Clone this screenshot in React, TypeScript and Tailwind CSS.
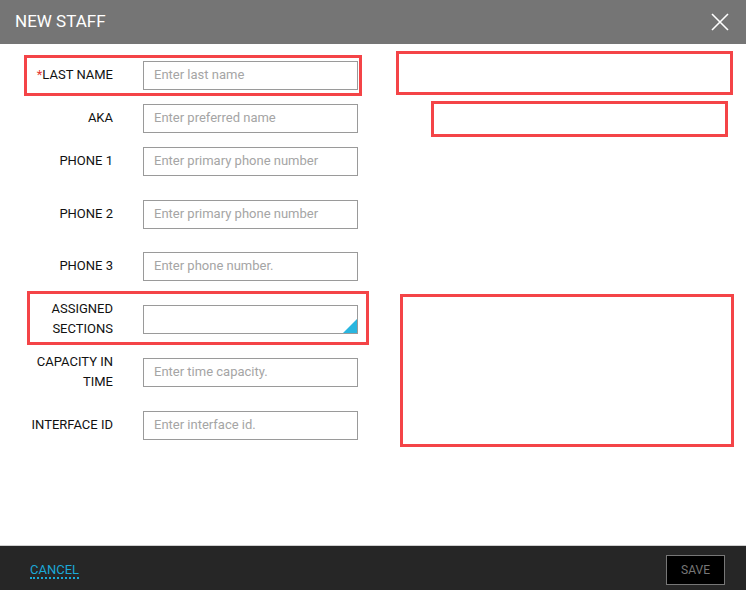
import React from "react";

const Input = ({ ph, disabled, value, drop }: { ph?: string; disabled?: boolean; value?: string; drop?: boolean }) => (
  <div className={`relative w-[215px] h-[29px] border border-[#9a9a9a] flex items-center px-[10px] text-[13px] ${disabled ? "bg-[#ebebeb]" : "bg-white"}`}>
    {value ? <span className={disabled ? "text-[#a0a0a0]" : "text-[#222]"}>{value}</span> : <span className="text-[#a5a5a5]">{ph}</span>}
    {drop && (
      <svg className="absolute right-0 bottom-0" width="14" height="14" viewBox="0 0 14 14"><polygon points="14,0 14,14 0,14" fill="#29b6e0" /></svg>
    )}
  </div>
);

const Label = ({ children, w }: { children: React.ReactNode; w: string }) => (
  <div className={`${w} text-right text-[13px] leading-[20px] text-[#111] pr-[30px]`}>{children}</div>
);

const Field = ({ label, lw, children }: { label: React.ReactNode; lw: string; children: React.ReactNode }) => (
  <div className="flex items-center">
    <Label w={lw}>{label}</Label>
    {children}
  </div>
);

const Radio = ({ on, label }: { on?: boolean; label: string }) => (
  <div className="flex items-center gap-[7px] text-[13px] text-[#222]">
    <div className="w-[15px] h-[15px] rounded-full border-[1.5px] border-[#666] flex items-center justify-center">
      {on && <div className="w-[8px] h-[8px] rounded-full bg-[#29b6e0]" />}
    </div>
    {label}
  </div>
);

export default function App() {
  const rows: [number, React.ReactNode, React.ReactNode][] = [
    [0, <Field lw="w-[143px]" label={<><span className="text-[#e53935]">*</span>LAST NAME</>}><Input ph="Enter last name" /></Field>,
      <Field lw="w-[511px]" label={<><span className="text-[#e53935]">*</span>FIRST NAME</>}><Input ph="Enter first name" /></Field>],
    [3, <Field lw="w-[143px]" label="AKA"><Input ph="Enter preferred name" /></Field>,
      <Field lw="w-[511px]" label="ROLE"><Input value="GRA-Guest Room Attendant" drop /></Field>],
    [3, <Field lw="w-[143px]" label="PHONE 1"><Input ph="Enter primary phone number" /></Field>,
      <Field lw="w-[511px]" label={<>PHONE 1<br />TYPE</>}><Input drop /></Field>],
    [13, <Field lw="w-[143px]" label="PHONE 2"><Input ph="Enter primary phone number" /></Field>,
      <Field lw="w-[511px]" label={<>PHONE 2<br />TYPE</>}><Input drop /></Field>],
    [12, <Field lw="w-[143px]" label="PHONE 3"><Input ph="Enter phone number." /></Field>,
      <Field lw="w-[511px]" label={<>PHONE 3<br />TYPE</>}><Input drop /></Field>],
    [13, <Field lw="w-[143px]" label={<>ASSIGNED<br />SECTIONS</>}><Input drop /></Field>,
      <Field lw="w-[511px]" label="PRIORITY"><Input value="1" disabled /></Field>],
    [13, <Field lw="w-[143px]" label={<>CAPACITY IN<br />TIME</>}><Input ph="Enter time capacity." /></Field>,
      <Field lw="w-[511px]" label={<>CAPACITY IN<br />POINTS</>}><Input ph="Enter points capacity" /></Field>],
    [13, <Field lw="w-[143px]" label="INTERFACE ID"><Input ph="Enter interface id." /></Field>,
      <Field lw="w-[511px]" label="ACTIVE?"><div className="w-[215px] flex items-center pl-[17px] gap-[49px]"><Radio on label="Active" /><Radio label="Inactive" /></div></Field>],
  ];
  return (
    <div className="relative w-[746px] h-[590px] flex flex-col bg-white" style={{ fontFamily: "Roboto, 'Liberation Sans', sans-serif" }}>
      <div className="h-[44px] bg-[#757575] flex items-center justify-between px-[15px] shrink-0">
        <span className="text-white text-[17px]">NEW STAFF</span>
        <svg width="18" height="18" viewBox="0 0 18 18" className="mr-[2px]"><path d="M1 1L17 17M17 1L1 17" stroke="white" strokeWidth="1.6" /></svg>
      </div>
      <div className="flex-1 pt-[11px] flex flex-col">
        {rows.map(([m, l, r], i) => (
          <div key={i} className="flex items-center h-[40px] shrink-0" style={{ marginTop: m }}>
            <div className="w-[368px] flex items-center">{l}</div>
            <div className="w-[378px] flex items-center">{r}</div>
          </div>
        ))}
      </div>
      <div className="h-[45px] bg-[#262626] border-t border-[#d0d0d0] flex items-center justify-between pl-[30px] pr-[21px] shrink-0">
        <span className="text-[#1ba8d6] text-[13px] border-b-2 border-dotted border-[#1ba8d6] leading-[15px] mt-[5px]">CANCEL</span>
        <div className="w-[59px] h-[30px] bg-black border border-[#777] flex items-center justify-center text-[#777] text-[12px] mt-[4px]">SAVE</div>
      </div>
      <div className="absolute left-[24px] top-[55px] w-[338px] h-[41px] border-[3px] border-[#f44447]" />
      <div className="absolute left-[396px] top-[51px] w-[337px] h-[44px] border-[3px] border-[#f44447]" />
      <div className="absolute left-[431px] top-[101px] w-[297px] h-[36px] border-[3px] border-[#f44447]" />
      <div className="absolute left-[27px] top-[291px] w-[342px] h-[54px] border-[3px] border-[#f44447]" />
      <div className="absolute left-[400px] top-[294px] w-[334px] h-[153px] border-[3px] border-[#f44447]" />
    </div>
  );
}
